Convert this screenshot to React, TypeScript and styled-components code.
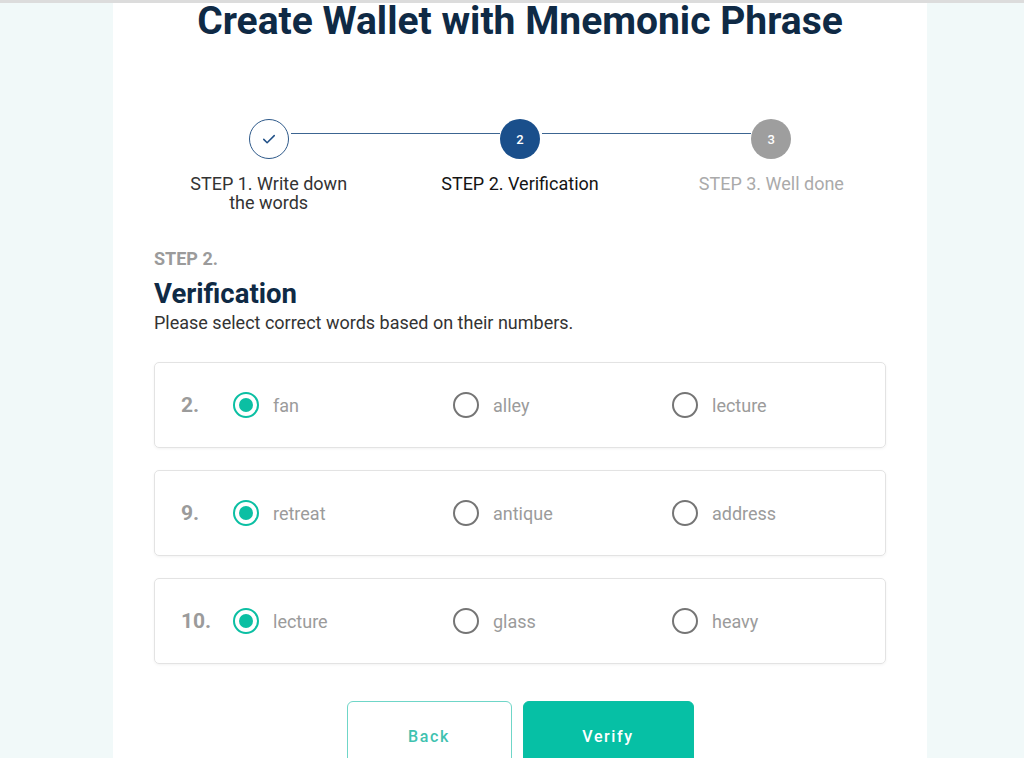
import React, { useState } from 'react';
import styled, { createGlobalStyle } from 'styled-components';

const navy = '#0f2a45';
const teal = '#0bbfa3';
const grey = '#9b9b9b';

const GlobalStyle = createGlobalStyle`
  html, body {
    margin: 0;
    padding: 0;
    background: #f1f9f9;
    font-family: Roboto, "Liberation Sans", sans-serif;
  }
`;

const Page = styled.div`
  min-height: 100vh;
  border-top: 3px solid #dcdcdc;
  display: flex;
  justify-content: center;
`;

const Card = styled.main`
  width: 814px;
  background: #fff;
  padding: 0 41px 40px;
  box-sizing: border-box;
  margin-left: 16px;
`;

const Title = styled.h1`
  margin: 0;
  text-align: center;
  font-size: 39px;
  font-weight: 700;
  color: ${navy};
  line-height: 37px;
`;

const Stepper = styled.div`
  display: grid;
  grid-template-columns: repeat(3, 1fr);
  margin: 79px -41px 0;
  padding: 0 30px;
`;

const Step = styled.div`
  position: relative;
  display: flex;
  flex-direction: column;
  align-items: center;
`;

const Connector = styled.div`
  position: absolute;
  top: 14px;
  left: calc(50% + 22px);
  width: calc(100% - 42px);
  height: 1px;
  background: #3c6591;
`;

type StepState = 'done' | 'active' | 'todo';

const Dot = styled.div<{ $state: StepState }>`
  width: 40px;
  height: 40px;
  border-radius: 50%;
  box-sizing: border-box;
  display: flex;
  align-items: center;
  justify-content: center;
  font-size: 13px;
  font-weight: 500;
  color: #fff;
  background: ${(p) =>
    p.$state === 'done' ? '#fff' : p.$state === 'active' ? '#1a4f8b' : '#9e9e9e'};
  border: ${(p) => (p.$state === 'done' ? '1.5px solid #2f5a8a' : 'none')};
`;

const StepLabel = styled.div<{ $state: StepState }>`
  margin-top: 15px;
  width: 180px;
  text-align: center;
  font-size: 18px;
  line-height: 19px;
  color: ${(p) =>
    p.$state === 'done' ? '#333' : p.$state === 'active' ? '#141414' : '#aaa'};
`;

const SectionHead = styled.div`
  margin-top: 36px;
`;

const Eyebrow = styled.div`
  font-size: 18px;
  font-weight: 700;
  color: ${grey};
  line-height: 21px;
`;

const Heading = styled.h2`
  margin: 9px 0 0;
  font-size: 27.5px;
  line-height: 32px;
  font-weight: 700;
  color: ${navy};
`;

const Lead = styled.p`
  margin: 2px 0 0;
  font-size: 18px;
  line-height: 22px;
  color: #333;
`;

const Questions = styled.div`
  margin-top: 28px;
  display: flex;
  flex-direction: column;
  gap: 22px;
`;

const Question = styled.div`
  height: 86px;
  box-sizing: border-box;
  border: 1px solid #e3e3e3;
  border-radius: 5px;
  box-shadow: 0 1px 3px rgba(0, 0, 0, 0.05);
  display: grid;
  grid-template-columns: 52px 220px 219px 1fr;
  align-items: center;
  padding-left: 26px;
`;

const Num = styled.div`
  font-size: 21px;
  font-weight: 700;
  color: ${grey};
`;

const Option = styled.label`
  display: flex;
  align-items: center;
  gap: 14px;
  cursor: pointer;
  font-size: 18px;
  color: ${grey};
`;

const Ring = styled.span<{ $on: boolean }>`
  width: 26px;
  height: 26px;
  box-sizing: border-box;
  border-radius: 50%;
  border: 2px solid ${(p) => (p.$on ? teal : '#757575')};
  display: flex;
  align-items: center;
  justify-content: center;

  &::after {
    content: '';
    width: 14px;
    height: 14px;
    border-radius: 50%;
    background: ${teal};
    display: ${(p) => (p.$on ? 'block' : 'none')};
  }
`;

const Actions = styled.div`
  margin-top: 37px;
  display: flex;
  justify-content: center;
  gap: 11px;
`;

const Button = styled.button<{ $primary?: boolean }>`
  width: ${(p) => (p.$primary ? 171 : 165)}px;
  height: 70px;
  border-radius: 6px;
  font-family: inherit;
  font-size: 16px;
  font-weight: 500;
  letter-spacing: 1.6px;
  cursor: pointer;
  border: 1px solid ${(p) => (p.$primary ? teal : '#6fd6c8')};
  background: ${(p) => (p.$primary ? '#06c0a5' : '#fff')};
  color: ${(p) => (p.$primary ? '#fff' : '#3fc2b0')};
`;

const Check = () => (
  <svg width="18" height="18" viewBox="0 0 24 24" fill="none" stroke="#1f4f86" strokeWidth="2" strokeLinecap="round" strokeLinejoin="round">
    <path d="M5 12.5l4.5 4.5L19 7.5" />
  </svg>
);

const steps: { label: string; state: StepState; n: number }[] = [
  { label: 'STEP 1. Write down the words', state: 'done', n: 1 },
  { label: 'STEP 2. Verification', state: 'active', n: 2 },
  { label: 'STEP 3. Well done', state: 'todo', n: 3 },
];

const questions = [
  { n: 2, words: ['fan', 'alley', 'lecture'] },
  { n: 9, words: ['retreat', 'antique', 'address'] },
  { n: 10, words: ['lecture', 'glass', 'heavy'] },
];

export default function App() {
  const [picked, setPicked] = useState<Record<number, number>>({ 2: 0, 9: 0, 10: 0 });

  return (
    <>
      <GlobalStyle />
      <Page>
        <Card>
          <Title>Create Wallet with Mnemonic Phrase</Title>

          <Stepper>
            {steps.map((s, i) => (
              <Step key={s.n}>
                {i < steps.length - 1 && <Connector />}
                <Dot $state={s.state}>{s.state === 'done' ? <Check /> : s.n}</Dot>
                <StepLabel $state={s.state}>{s.label}</StepLabel>
              </Step>
            ))}
          </Stepper>

          <SectionHead>
            <Eyebrow>STEP 2.</Eyebrow>
            <Heading>Verification</Heading>
            <Lead>Please select correct words based on their numbers.</Lead>
          </SectionHead>

          <Questions>
            {questions.map((q) => (
              <Question key={q.n}>
                <Num>{q.n}.</Num>
                {q.words.map((w, i) => (
                  <Option key={w} onClick={() => setPicked({ ...picked, [q.n]: i })}>
                    <Ring $on={picked[q.n] === i} />
                    {w}
                  </Option>
                ))}
              </Question>
            ))}
          </Questions>

          <Actions>
            <Button>Back</Button>
            <Button $primary>Verify</Button>
          </Actions>
        </Card>
      </Page>
    </>
  );
}
